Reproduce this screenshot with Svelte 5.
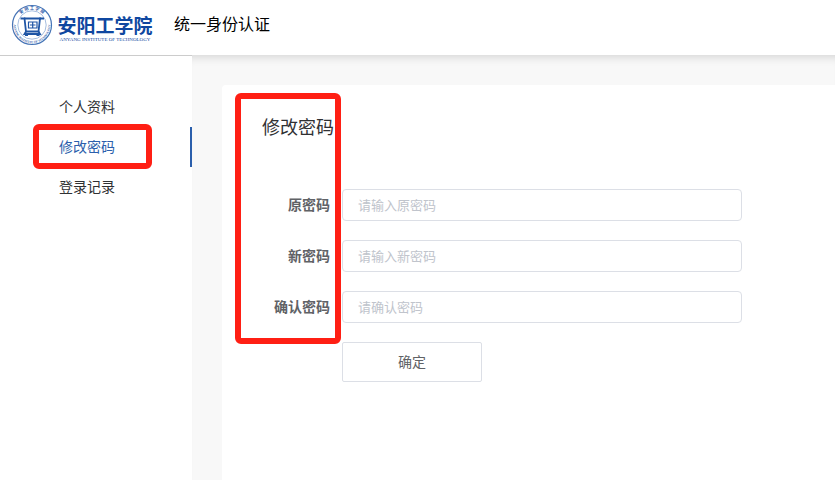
<script lang="ts">
  interface Veld {
    id: string;
    label: string;
    placeholder: string;
    value: string;
  }

  const menu: string[] = ["个人资料", "修改密码", "登录记录"];

  let actief: string = $state("修改密码");
  let velden: Veld[] = $state([
    { id: "old", label: "原密码", placeholder: "请输入原密码", value: "" },
    { id: "new", label: "新密码", placeholder: "请输入新密码", value: "" },
    { id: "confirm", label: "确认密码", placeholder: "请确认密码", value: "" },
  ]);

  function kies(event: MouseEvent, item: string): void {
    event.preventDefault();
    actief = item;
  }

  function submit(event: SubmitEvent): void {
    event.preventDefault();
  }
</script>

<div class="page">
  <header>
    <svg class="emblem" viewBox="0 0 42 42" aria-hidden="true">
      <defs>
        <path id="arc-top" d="M5.5 21a15.5 15.5 0 0 1 31 0" />
        <path id="arc-bottom" d="M2.8 21a18.2 18.2 0 0 0 36.4 0" />
      </defs>
      <circle cx="21" cy="21" r="19.5" fill="#fff" stroke="#4674b6" stroke-width="1.2" />
      <circle cx="21" cy="21" r="14.2" fill="none" stroke="#8facd5" stroke-width="0.8" />
      <text class="ring"><textPath href="#arc-top" startOffset="50%">安 阳 工 学 院</textPath></text>
      <text class="ring latin"
        ><textPath href="#arc-bottom" startOffset="50%">ANYANG INSTITUTE OF TECHNOLOGY</textPath></text
      >
      <g fill="none" stroke="#1f55a5" stroke-width="1.8">
        <path d="M9.500 14.500h4l1.500 13h12.500l1.500-13h4" />
        <path d="M13 14.500h17M15 27.500l-1.500 2.500h15.500l-1.500-2.500" />
        <path d="M17.500 18h8.500v6h-8.500zM19 21h5.500M21.700 18v6" stroke-width="1.2" />
        <path d="M14 31.200h3M25.500 31.200h3" />
      </g>
    </svg>
    <svg class="wordmark" viewBox="0 0 92 42">
      <text class="name" x="45" y="26">安阳工学院</text>
      <text class="english" x="45" y="34">ANYANG INSTITUTE OF TECHNOLOGY</text>
    </svg>
    <span class="system">统一身份认证</span>
  </header>

  <div class="body">
    <nav>
      {#each menu as item}
        <a
          href="#top"
          class:active={item === actief}
          onclick={(event) => kies(event, item)}
        >
          {item}
        </a>
      {/each}
      <div class="mark mark-menu"></div>
    </nav>

    <main>
      <section class="card">
        <h1>修改密码</h1>
        <form onsubmit={submit}>
          {#each velden as veld}
            <label for={veld.id}>{veld.label}</label>
            <input
              id={veld.id}
              type="password"
              placeholder={veld.placeholder}
              bind:value={veld.value}
            />
          {/each}
          <button type="submit">确定</button>
        </form>
        <div class="mark mark-form"></div>
      </section>
    </main>
  </div>
</div>

<style>
  :global(body) {
    margin: 0;
    background: #fff;
    font-family: "Liberation Sans", "Noto Sans CJK SC", sans-serif;
    font-size: 14px;
    line-height: 20px;
    color: #303133;
  }

  .page {
    min-height: 100vh;
    display: flex;
    flex-direction: column;
  }

  header {
    height: 55px;
    padding-left: 11px;
    display: flex;
    align-items: center;
    background: #fff;
  }

  .emblem {
    width: 42px;
    height: 42px;
    margin-bottom: 5px;
  }

  .ring {
    font-size: 4px;
    font-weight: bold;
    text-anchor: middle;
    fill: #1f55a5;
  }

  .latin {
    font-family: "Liberation Serif", serif;
    font-size: 3px;
  }

  .wordmark {
    width: 92px;
    height: 42px;
    margin: 0 22px 0 7px;
    overflow: visible;
  }

  .name {
    font-size: 19px;
    font-weight: bold;
    text-anchor: middle;
    fill: #0f47a0;
  }

  .english {
    font-family: "Liberation Serif", serif;
    font-size: 5px;
    text-anchor: middle;
    fill: #0f47a0;
  }

  .system {
    margin-bottom: 6px;
    font-size: 16px;
    color: #000;
  }

  .body {
    flex: 1;
    display: flex;
  }

  nav {
    position: relative;
    box-sizing: border-box;
    width: 192px;
    padding-top: 31px;
    border-top: 1px solid #ccc;
    background: #fff;
  }

  nav a {
    display: block;
    padding-left: 59px;
    line-height: 40px;
    color: #303133;
    text-decoration: none;
  }

  nav a.active {
    color: #2b5fac;
    border-right: 2px solid #2b5fac;
  }

  main {
    flex: 1;
    display: flex;
    padding: 30px 0 0 30px;
    background: #f8f8f8;
    box-shadow: inset 0 10px 10px -8px rgba(0, 0, 0, 0.15);
  }

  .card {
    position: relative;
    flex: 1;
    padding: 30px 40px;
    border-radius: 4px 0 0 0;
    background: #fff;
  }

  h1 {
    margin: 0 0 48px;
    font-size: 18px;
    font-weight: normal;
    line-height: 26px;
  }

  form {
    display: grid;
    grid-template-columns: 68px minmax(0, 400px);
    column-gap: 12px;
    row-gap: 19px;
    align-items: center;
  }

  label {
    text-align: right;
    font-weight: bold;
    white-space: nowrap;
    color: #606266;
  }

  input {
    box-sizing: border-box;
    width: 100%;
    height: 32px;
    padding: 0 15px;
    border: 1px solid #dcdfe6;
    border-radius: 4px;
    background: #fff;
    font-family: inherit;
    font-size: 13px;
    line-height: 30px;
    color: #606266;
  }

  input::placeholder {
    color: #c0c4cc;
  }

  button {
    grid-column: 2;
    width: 140px;
    height: 40px;
    padding: 0;
    border: 1px solid #dcdfe6;
    border-radius: 2px;
    background: #fff;
    font-family: inherit;
    font-size: 14px;
    line-height: 20px;
    color: #606266;
  }

  input:focus,
  button:hover {
    outline: none;
    border-color: #2b5fac;
  }

  .mark {
    position: absolute;
    box-sizing: border-box;
    border: 6px solid #ff1f14;
    border-radius: 6px;
    pointer-events: none;
  }

  .mark-menu {
    top: 68px;
    left: 33px;
    width: 119px;
    height: 45px;
  }

  .mark-form {
    top: 8px;
    left: 13px;
    width: 106px;
    height: 251px;
  }
</style>
